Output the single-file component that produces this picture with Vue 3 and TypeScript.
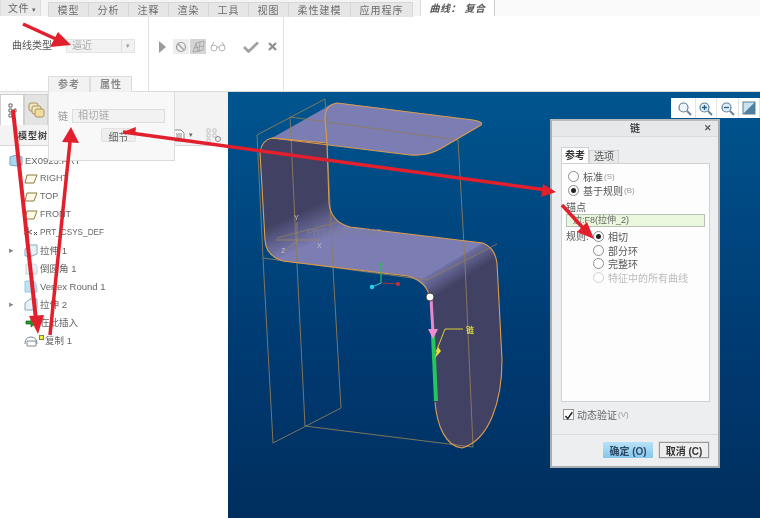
<template>
  <div class="app">
    <!-- Ribbon tabs -->
    <div class="tab-row">
      <div class="file-btn">文件 <span class="caret">▾</span></div>
      <div class="tabs">
        <div v-for="t in ribbonTabs" :key="t" class="tab">{{ t }}</div>
      </div>
      <div class="active-tab">曲线： 复合</div>
      <div class="tab-rest"></div>
    </div>

    <!-- Ribbon content -->
    <div class="ribbon">
      <div class="group group-type">
        <span class="type-label">曲线类型</span>
        <div class="select">
          <span>逼近</span>
          <span class="select-btn">▾</span>
        </div>
      </div>
      <div class="group group-tools">
        <svg class="play" width="7" height="12" viewBox="0 0 7 12"><path d="M0 0 7 6 0 12Z" fill="#9a9a9a" /></svg>
        <div class="tool-box">
          <svg width="12" height="12" viewBox="0 0 12 12"><circle cx="6" cy="6" r="4.5" fill="none" stroke="#9c9c9c" stroke-width="1.2" /><path d="M3 3 9 9" stroke="#9c9c9c" stroke-width="1.2" /></svg>
        </div>
        <div class="tool-box dark">
          <svg width="13" height="13" viewBox="0 0 13 13"><path d="M1 12 4 3 12 1 11 10Z M4 3 6 12 M8 2 7 12 M2 8 11 6" fill="none" stroke="#a3a3a3" stroke-width="0.9" /></svg>
        </div>
        <svg class="glasses" width="16" height="11" viewBox="0 0 16 11"><circle cx="4" cy="7" r="3" fill="none" stroke="#b4b4b4" /><circle cx="12" cy="7" r="3" fill="none" stroke="#b4b4b4" /><path d="M7 6.5Q8 5.5 9 6.5M1.5 5 4 1M14.5 5 12 1" fill="none" stroke="#b4b4b4" /></svg>
        <svg class="check" width="16" height="12" viewBox="0 0 16 12"><path d="M1 6 5.5 10.5 15 1.5" fill="none" stroke="#a2a2a2" stroke-width="2.8" /></svg>
        <svg class="cross" width="9" height="9" viewBox="0 0 9 9"><path d="M1 1 8 8M8 1 1 8" stroke="#8f8f8f" stroke-width="2.2" /></svg>
      </div>
    </div>

    <div class="main">
      <!-- Left side panel -->
      <aside class="side">
        <div class="side-tabs">
          <div class="side-tab on">
            <svg width="9" height="15" viewBox="0 0 9 15"><path d="M1 1h3v3H1zM1 6h3v3H1zM1 11h3v3H1zM6 6h2v3H6z" fill="#fff" stroke="#666" /></svg>
          </div>
          <div class="side-tab">
            <svg width="17" height="17" viewBox="0 0 17 17"><rect x="1" y="1" width="9" height="8" rx="2" fill="#f3e6bd" stroke="#a8935c" /><rect x="4" y="4" width="9" height="8" rx="2" fill="#f3e6bd" stroke="#a8935c" /><rect x="7" y="7" width="9" height="8" rx="2" fill="#f0dc9f" stroke="#a8935c" /></svg>
          </div>
        </div>
        <div class="tree-head">
          <span class="tree-title">模型树</span>
          <div class="tree-tools">
            <svg width="12" height="13" viewBox="0 0 12 13"><path d="M1 1h7l3 3v8H1Z M3 5h6M3 7h6M3 9h6" fill="#fff" stroke="#8b8b8b" /></svg>
            <span class="tree-caret">▾</span>
            <svg width="16" height="15" viewBox="0 0 16 15"><path d="M1 1h3v3H1zM1 6h3v3H1zM1 11h3v3H1zM7 1h3v3H7zM7 6h3v3H7z" fill="#fff" stroke="#c0c0c0" /><circle cx="12" cy="11" r="2.5" fill="none" stroke="#888" /></svg>
          </div>
        </div>
        <ul class="tree">
          <li v-for="row in treeRows" :key="row.label" class="tree-row" :class="row.icon">
            <span v-if="row.icon !== 'part'" class="twisty">{{ row.expand ? '▸' : '' }}</span>
            <svg class="tree-icon" width="14" height="13" viewBox="0 0 14 13">
              <path v-if="row.icon === 'part'" d="M1 3 7 1 13 3V11L7 12 1 11Z" fill="#a8d8f0" stroke="#6fa8c8" />
              <path v-else-if="row.icon === 'plane'" d="M3 3H13L10 11H1Z" fill="#fffbe8" stroke="#8a7a3c" />
              <path v-else-if="row.icon === 'csys'" d="M4 1V11M0 4 8 8M0 8 8 4M10 6l3 3M13 6l-3 3" fill="none" stroke="#555" />
              <path v-else-if="row.icon === 'solid'" d="M1 5 6 1H13V10L8 12H1Z" fill="#e6f1f8" stroke="#88a8bc" />
              <path v-else-if="row.icon === 'round'" d="M2 2H9Q13 2 13 7V12H2Z" fill="#eef2f5" stroke="#c8d2d8" />
              <path v-else-if="row.icon === 'vertex'" d="M1 1H10Q13 4 13 12H1Z" fill="#b9e2f6" stroke="#9cc8de" />
              <path v-else-if="row.icon === 'insert'" d="M2 5H7V2L13 6.5 7 11V8H2Z" fill="#1f9a2a" stroke="#14601a" stroke-width="0.7" />
              <path v-else d="M1 10Q1 3 7 3T13 10M3 7H12V12H3Z" fill="none" stroke="#7c8b96" />
            </svg>
            <span v-if="row.icon === 'copy'" class="copy-mark"></span>
            <span class="tree-label">{{ row.label }}</span>
          </li>
        </ul>
      </aside>

      <!-- Graphics window -->
      <div class="canvas">
        <svg class="model" width="532" height="426" viewBox="228 92 532 426">
          <defs>
            <linearGradient id="wallL" gradientUnits="userSpaceOnUse" x1="300" y1="212" x2="314" y2="243">
              <stop offset="0" stop-color="#414163" />
              <stop offset="1" stop-color="#414163" stop-opacity="0" />
            </linearGradient>
            <linearGradient id="wallR" gradientUnits="userSpaceOnUse" x1="448" y1="258" x2="462" y2="280">
              <stop offset="0" stop-color="#414163" stop-opacity="0" />
              <stop offset="1" stop-color="#414163" />
            </linearGradient>
          </defs>

          <!-- surfaces -->
          <path d="M272 138 325 108 Q331 103 340 103 L473 120 Q484 122 481 125 L440 149 Q428 156 410 155Z" fill="#7b7db3" />
          <path d="M260 152Q262 140 272 138L327 143 329 203Q331 222 350 227L483 243Q495 248 497 263L502 360C502 400 490 440 462 448 445 446 437 425 435 402L430 298Q427 282 408 276L283 261Q266 256 265 240Z" fill="#7b7db3" />
          <path d="M260 152Q262 140 272 138L327 143 329 203Q331 222 350 227L283 261Q266 256 265 240Z" fill="url(#wallL)" />
          <path d="M497 263 502 360C502 400 490 440 462 448 445 446 437 425 435 402L430 298Q427 284 420 280L483 243Q495 248 497 263Z" fill="url(#wallR)" />

          <!-- wireframe box -->
          <g fill="none" stroke="#8d7c5e" stroke-width="0.9">
            <path d="M257 135 325 99 333 268 341 408 273 443 263 258 257 135" />
            <path d="M290 117 297 263 305 426" />
            <path d="M290 117 458 140 465 263 473 447 305 426" />
            <path d="M263 258 427 280 497 244" />
            <path d="M277 238 338 222" />
          </g>

          <!-- edges -->
          <g fill="none" stroke="#dc9c4e" stroke-width="1.1">
            <path d="M327 143 325 118Q325 105 337 103L473 120Q484 122 481 125L440 149Q428 156 410 155L272 138" />
            <path d="M260 152Q262 140 272 138L327 143 329 203Q331 222 350 227L483 243Q495 248 497 263L502 360C502 400 490 440 462 448 445 446 437 425 435 402" />
            <path d="M430 298Q427 282 408 276L283 261Q266 256 265 240L260 152" />
          </g>

          <!-- datum labels -->
          <text x="307" y="235" class="csys-name">PRT_CSYS_DEF</text>
          <g fill="none" stroke="#a08b5c" stroke-width="0.8"><path d="M297 222V245M276 240H320M282 253 297 241" /></g>
          <text x="294" y="220" class="csys-axis">Y</text>
          <text x="317" y="248" class="csys-axis">X</text>
          <text x="281" y="253" class="csys-axis">Z</text>

          <!-- triad -->
          <path d="M381 283V265" stroke="#2fbb5c" stroke-width="1.2" />
          <path d="M381 283 398 284" stroke="#a33048" stroke-width="1.2" />
          <path d="M381 283 372 287" stroke="#32b8d8" stroke-width="1.2" />
          <circle cx="381" cy="264" r="1.6" fill="#2fbb5c" />
          <circle cx="398" cy="284" r="2" fill="#c83040" />
          <circle cx="372" cy="287" r="2.2" fill="#28d0f0" />

          <!-- selected chain -->
          <path d="M431 298 433 333" stroke="#e889c8" stroke-width="3" />
          <path d="M433 335 436 401" stroke="#27c45c" stroke-width="4" />
          <path d="M428 329H438L433 339Z" fill="#ef8ccf" />
          <path d="M463 329H445L436 352" fill="none" stroke="#d8cf3c" stroke-width="1" />
          <path d="M435 358 438 347 441 351Z" fill="#e8e040" />
          <text x="466" y="333" class="chain-tag">链</text>
          <circle cx="430" cy="297" r="4" fill="#fff" stroke="#222" stroke-width="0.8" />
        </svg>

        <div class="view-tools">
          <span v-for="n in 4" :key="n" class="view-tool">
            <svg v-if="n < 4" width="15" height="15" viewBox="0 0 15 15">
              <circle cx="6.5" cy="6.5" r="4.5" :fill="n === 1 ? '#eef6fa' : '#dff0f8'" stroke="#5d7f92" stroke-width="1.2" />
              <path d="M10 10 14 14" stroke="#5d7f92" stroke-width="1.8" />
              <path v-if="n === 2" d="M4 6.5H9M6.5 4V9" stroke="#2a5a8a" stroke-width="1.3" />
              <path v-if="n === 3" d="M4 6.5H9" stroke="#2a5a8a" stroke-width="1.3" />
            </svg>
            <svg v-else width="14" height="14" viewBox="0 0 14 14"><rect x="1" y="1" width="12" height="12" fill="#c8e4f2" stroke="#5d7f92" /><path d="M1 13 13 1V13Z" fill="#4f7f9c" /></svg>
          </span>
        </div>

        <!-- Chain dialog -->
        <div class="dialog">
          <div class="dialog-title">
            <span>链</span>
            <span class="dialog-close">✕</span>
          </div>
          <div class="dialog-body">
            <div class="dialog-tabs">
              <span class="dialog-tab on">参考</span>
              <span class="dialog-tab">选项</span>
            </div>
            <div class="dialog-panel">
              <label class="radio-row"><i class="radio"></i>标准<em>(S)</em></label>
              <label class="radio-row"><i class="radio checked"></i>基于规则<em>(B)</em></label>
              <div class="anchor-label">锚点</div>
              <div class="anchor-input">边:F8(拉伸_2)</div>
              <div class="rules">
                <span class="rules-label">规则:</span>
                <div class="rules-list">
                  <label class="radio-row"><i class="radio checked"></i>相切</label>
                  <label class="radio-row"><i class="radio"></i>部分环</label>
                  <label class="radio-row"><i class="radio"></i>完整环</label>
                  <label class="radio-row off"><i class="radio"></i>特征中的所有曲线</label>
                </div>
              </div>
            </div>
            <label class="verify">
              <span class="checkbox">
                <svg width="12" height="12" viewBox="0 0 12 12"><path d="M2 6 5 9.5 11 1" fill="none" stroke="#222" stroke-width="2" /></svg>
              </span>
              动态验证<em>(V)</em>
            </label>
          </div>
          <div class="dialog-foot">
            <button class="btn primary">确定 (O)</button>
            <button class="btn">取消 (C)</button>
          </div>
        </div>
      </div>

      <!-- Reference popover -->
      <div class="popover">
        <div class="pop-tabs">
          <span class="pop-tab">参考</span>
          <span class="pop-tab">属性</span>
        </div>
        <div class="pop-body">
          <div class="pop-row">
            <span class="pop-label">链</span>
            <div class="pop-input">相切链</div>
          </div>
          <button class="pop-btn">细节</button>
        </div>
      </div>
    </div>

    <!-- Red annotation arrows -->
    <svg class="arrows" width="760" height="518" viewBox="0 0 760 518">
      <g stroke="#e21f2c" fill="none">
        <path d="M23 24 58 40" stroke-width="3.5" />
        <path d="M13 110 36 320" stroke-width="4" />
        <path d="M50 335 70 142" stroke-width="3.5" />
        <path d="M123 132 546 190" stroke-width="3.5" />
        <path d="M562 205 584 229" stroke-width="3.5" />
      </g>
      <g fill="#e21f2c">
        <path d="M71 45 50 47 58 32Z" />
        <path d="M38 334 29 316 44 315Z" />
        <path d="M71 127 79 143 62 142Z" />
        <path d="M123 132 136 127 135 135Z" />
        <path d="M556 192 541 197 543 184Z" />
        <path d="M594 239 577 232 587 222Z" />
      </g>
    </svg>
  </div>
</template>

<script setup lang="ts">
interface TreeRow {
  label: string;
  icon: string;
  expand?: boolean;
}

const ribbonTabs: string[] = ['模型', '分析', '注释', '渲染', '工具', '视图', '柔性建模', '应用程序'];

const treeRows: TreeRow[] = [
  { label: 'EX0925.PRT', icon: 'part' },
  { label: 'RIGHT', icon: 'plane' },
  { label: 'TOP', icon: 'plane' },
  { label: 'FRONT', icon: 'plane' },
  { label: 'PRT_CSYS_DEF', icon: 'csys' },
  { label: '拉伸 1', icon: 'solid', expand: true },
  { label: '倒圆角 1', icon: 'round' },
  { label: 'Vertex Round 1', icon: 'vertex' },
  { label: '拉伸 2', icon: 'solid', expand: true },
  { label: '在此插入', icon: 'insert' },
  { label: '复制 1', icon: 'copy' },
];
</script>

<style>
html, body { margin: 0; padding: 0; background: #fff; }
</style>

<style scoped>
.app { position: relative; width: 760px; height: 518px; overflow: hidden; font-family: "Liberation Sans", "Noto Sans CJK SC", sans-serif; font-size: 10px; color: #555; background: #fff; filter: blur(0.35px); }

.tab-row { display: flex; height: 16px; background: #f4f4f4; }
.file-btn { width: 41px; height: 16px; box-sizing: border-box; padding-left: 7px; line-height: 17px; font-size: 10px; letter-spacing: 0.5px; color: #666; background: #e9e9e9; border: 1px solid #ddd; border-top: none; border-bottom: none; }
.caret { font-size: 7px; }
.tabs { display: flex; margin-left: 7px; margin-top: 2px; height: 14px; background: #e6e6e6; border: 1px solid #d8d8d8; border-bottom: none; }
.tab { padding: 0 8.5px; border-right: 1px solid #d6d6d6; line-height: 15px; letter-spacing: 1px; color: #6d6d6d; white-space: nowrap; }
.tab:last-child { border-right: none; }
.active-tab { width: 75px; margin-left: 7px; background: #fff; border-left: 1px solid #ddd; border-right: 1px solid #ccc; box-sizing: border-box; text-align: center; line-height: 17px; font-style: italic; font-weight: bold; color: #555; letter-spacing: 0.5px; white-space: nowrap; }
.tab-rest { flex: 1; background: #fafafa; }

.ribbon { display: flex; height: 76px; background: #fff; border-bottom: 1px solid #dcdcdc; box-sizing: border-box; }
.group { display: flex; align-items: flex-start; box-sizing: border-box; border-right: 1px solid #e2e2e2; height: 75px; }
.group-type { width: 149px; padding: 23px 0 0 12px; }
.type-label { width: 54px; line-height: 14px; color: #555; }
.select { display: flex; justify-content: space-between; width: 69px; height: 14px; box-sizing: border-box; background: #f2f2f2; border: 1px solid #e4e4e4; padding-left: 5px; line-height: 12px; color: #aaa; }
.select-btn { width: 12px; border-left: 1px solid #ddd; text-align: center; font-size: 7px; color: #999; }
.group-tools { width: 135px; padding: 23px 0 37px 10px; align-items: center; }
.play { margin-right: 7px; }
.tool-box { display: flex; align-items: center; justify-content: center; width: 16px; height: 15px; background: #eee; }
.tool-box.dark { background: #d5d5d5; margin-left: 1px; }
.glasses { margin-left: 4px; }
.check { margin-left: 17px; }
.cross { margin-left: 9px; }

.main { position: relative; display: flex; height: 426px; }
.side { width: 228px; background: #fff; }
.side-tabs { display: flex; height: 33px; box-sizing: border-box; padding-top: 2px; background: #f3f3f3; }
.side-tab { display: flex; align-items: center; justify-content: center; width: 22px; background: #e3e3e3; border: 1px solid #d0d0d0; border-bottom: none; }
.side-tab.on { background: #fff; }
.tree-head { display: flex; justify-content: space-between; align-items: center; height: 21px; box-sizing: border-box; padding: 0 6px 0 18px; background: #f3f3f3; border-bottom: 1px solid #d9d9d9; }
.tree-title { font-size: 9px; font-weight: bold; color: #444; letter-spacing: 1px; }
.tree-tools { display: flex; align-items: center; gap: 4px; }
.tree-caret { margin-right: 9px; font-size: 7px; color: #666; }
.tree { list-style: none; margin: 5px 0 0; padding: 0; }
.tree-row { display: flex; align-items: center; height: 18px; padding-left: 9px; font-size: 9.5px; color: #666; white-space: nowrap; }
.tree-row.plane { font-size: 9px; }
.tree-row.csys { font-size: 8.2px; }
.twisty { width: 15px; font-size: 9px; color: #888; }
.tree-icon { flex: none; width: 14px; height: 13px; margin-right: 2px; }
.copy-mark { width: 5px; height: 5px; margin: -6px 1px 0 -1px; background: #f4ee30; border: 1px solid #7d8c30; box-sizing: border-box; }

.canvas { position: relative; flex: 1; background: linear-gradient(#00558f, #003a72 60%, #002f5e); }
.model { position: absolute; top: 0; left: 0; }
.csys-name { font: 9.5px "Liberation Sans", sans-serif; fill: #7f7d96; }
.csys-axis { font: 7px "Liberation Sans", sans-serif; fill: #c0bdc8; }
.chain-tag { font: bold 8px "Noto Sans CJK SC", sans-serif; fill: #e0d838; }

.view-tools { position: absolute; top: 6px; right: 0; display: flex; width: 89px; height: 20px; box-sizing: border-box; padding-left: 3px; background: #fff; }
.view-tool { display: flex; align-items: center; justify-content: center; width: 21px; border-right: 1px solid #e4e4e4; }

.dialog { position: absolute; left: 322px; top: 27px; display: flex; flex-direction: column; width: 170px; height: 349px; box-sizing: border-box; background: #eceeef; border: 2px solid #a9adaf; border-top-color: #b8bcbe; }
.dialog-title { position: relative; height: 15px; line-height: 15px; text-align: center; font-weight: bold; font-size: 10px; color: #444; background: #e6e8e9; border-bottom: 1px solid #d8dadb; }
.dialog-close { position: absolute; right: 6px; top: 0; font-size: 9px; color: #555; }
.dialog-body { flex: 1; padding: 10px 8px 0 9px; }
.dialog-tabs { display: flex; align-items: flex-end; height: 16px; }
.dialog-tab { box-sizing: border-box; height: 13px; width: 30px; text-align: center; line-height: 12px; color: #555; border: 1px solid #cfd1d2; border-bottom: none; background: #e8e9ea; }
.dialog-tab.on { height: 16px; width: 28px; line-height: 15px; background: #fff; font-weight: bold; color: #333; }
.dialog-panel { height: 239px; box-sizing: border-box; padding: 6px 4px 0; background: #fdfdfd; border: 1px solid #cfd1d2; }
.radio-row { display: flex; align-items: center; height: 13.5px; color: #555; white-space: nowrap; }
.radio-row em, .verify em { font-style: normal; font-size: 8px; color: #999; margin-left: 1px; }
.radio-row.off { color: #bbb; }
.radio { position: relative; flex: none; width: 9px; height: 9px; margin: 0 4px 0 2px; border: 1px solid #8a8a8a; border-radius: 50%; background: #fff; }
.radio.checked::after { content: ""; position: absolute; left: 2px; top: 2px; width: 5px; height: 5px; border-radius: 50%; background: #222; }
.off .radio { border-color: #cfcfcf; }
.anchor-label { margin-top: 4px; line-height: 13px; color: #555; }
.anchor-input { height: 13px; box-sizing: border-box; padding-left: 6px; line-height: 11px; font-size: 9px; color: #666; background: #e9f8dc; border: 1px solid #b8c0b8; white-space: nowrap; }
.rules { display: flex; margin-top: 3px; }
.rules-label { width: 25px; line-height: 13px; }
.rules-list { flex: 1; }
.verify { display: flex; align-items: center; height: 14px; margin-top: 5px; padding-left: 2px; color: #666; }
.checkbox { display: flex; width: 11px; height: 11px; margin-right: 3px; background: #fff; border: 1px solid #999; box-sizing: border-box; overflow: visible; }
.dialog-foot { display: flex; justify-content: flex-end; gap: 6px; height: 32px; box-sizing: border-box; padding: 7px 9px 0 0; border-top: 1px solid #d8dadb; }
.btn { width: 50px; height: 16px; padding: 0; font: bold 10px "Liberation Sans", "Noto Sans CJK SC", sans-serif; color: #333; background: #eee; border: 1px solid #999; outline: 1px solid #ddd; }
.btn.primary { background: linear-gradient(#b9e2f8, #86c6ee); border: none; outline: none; color: #2c4a64; }

.popover { position: absolute; left: 48px; top: -16px; width: 127px; }
.pop-tabs { display: flex; height: 16px; }
.pop-tab { box-sizing: border-box; width: 42px; text-align: center; line-height: 16px; font-weight: bold; letter-spacing: 1px; color: #8a8a8a; background: #f2f2f2; border: 1px solid #ddd; border-bottom: none; }
.pop-body { display: flex; flex-direction: column; height: 69px; box-sizing: border-box; padding: 16px 9px 0 9px; background: #f8f8f8; border: 1px solid #dcdcdc; border-top: none; }
.pop-row { display: flex; align-items: center; }
.pop-label { width: 14px; color: #999; }
.pop-input { flex: 1; height: 14px; box-sizing: border-box; padding-left: 5px; line-height: 12px; color: #aaa; background: #f2f2f2; border: 1px solid #ddd; letter-spacing: 0.5px; }
.pop-btn { align-self: flex-end; width: 35px; height: 14px; margin-top: 5px; margin-right: 29px; padding: 0; font: 10px "Liberation Sans", "Noto Sans CJK SC", sans-serif; color: #666; background: #eee; border: 1px solid #e2e2e2; border-radius: 2px; }

.arrows { position: absolute; top: 0; left: 0; pointer-events: none; }
</style>
